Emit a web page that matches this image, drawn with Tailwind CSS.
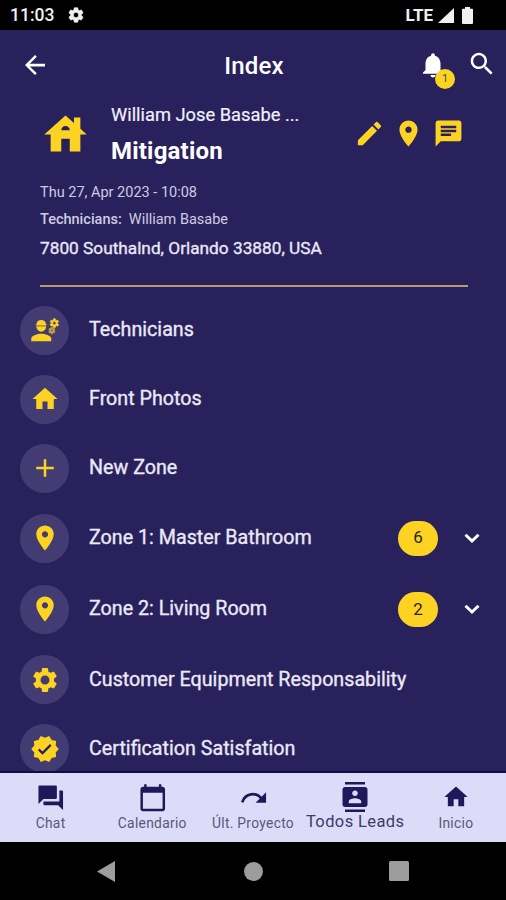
<!DOCTYPE html>
<html lang="en">
<head>
<meta charset="utf-8">
<title>Index</title>
<script src="https://cdn.jsdelivr.net/npm/@tailwindcss/browser@4"></script>
</head>
<body class="font-['Roboto','Noto_Sans',sans-serif]">
<svg class="hidden">
  <symbol id="home" viewBox="0 0 24 24"><path d="M10 20v-6h4v6h5v-8h3L12 3 2 12h3v8z"/></symbol>
  <symbol id="place" viewBox="0 0 24 24"><path d="M12 2C8.13 2 5 5.13 5 9c0 5.25 7 13 7 13s7-7.75 7-13c0-3.87-3.13-7-7-7zm0 9.5c-1.38 0-2.5-1.12-2.5-2.5s1.12-2.5 2.5-2.5 2.5 1.12 2.5 2.5-1.12 2.5-2.5 2.5z"/></symbol>
  <symbol id="gear" viewBox="0 0 24 24"><path d="M19.14 12.94c.04-.3.06-.61.06-.94 0-.32-.02-.64-.07-.94l2.03-1.58c.18-.14.23-.41.12-.61l-1.92-3.32c-.12-.22-.37-.29-.59-.22l-2.39.96c-.5-.38-1.03-.7-1.62-.94l-.36-2.54c-.04-.24-.24-.41-.48-.41h-3.84c-.24 0-.43.17-.47.41l-.36 2.54c-.59.24-1.13.57-1.62.94l-2.39-.96c-.22-.08-.47 0-.59.22L2.74 8.87c-.12.21-.08.47.12.61l2.03 1.58c-.05.3-.09.63-.09.94s.02.64.07.94l-2.03 1.58c-.18.14-.23.41-.12.61l1.92 3.32c.12.22.37.29.59.22l2.39-.96c.5.38 1.03.7 1.62.94l.36 2.54c.05.24.24.41.48.41h3.84c.24 0 .44-.17.47-.41l.36-2.54c.59-.24 1.13-.56 1.62-.94l2.39.96c.22.08.47 0 .59-.22l1.92-3.32c.12-.22.07-.47-.12-.61l-2.01-1.58zM12 15.6c-1.98 0-3.6-1.62-3.6-3.6s1.62-3.6 3.6-3.6 3.6 1.62 3.6 3.6-1.62 3.6-3.6 3.6z"/></symbol>
  <symbol id="down" viewBox="0 0 24 24"><path d="M6.8 9.4L12 14.400l5.200-5" fill="none" stroke="currentColor" stroke-width="2.400"/></symbol>
</svg>
<div class="w-[506px] h-[900px] flex flex-col overflow-hidden bg-[#28215c] text-[#f1effa]">

  <!-- Status bar -->
  <div class="h-[30px] shrink-0 bg-black flex items-center pl-[10px] pr-[33px] text-[#f0f0f0]">
    <span class="text-[17.5px] leading-none font-medium pt-[2px]">11:03</span>
    <svg class="size-[18px] ml-[13px] fill-current stroke-current"><use href="#gear"/></svg>
    <span class="ml-auto text-[17px] leading-none font-bold">LTE</span>
    <svg class="w-4 h-[15px] ml-[5px] fill-current" viewBox="0 0 16 15"><path d="M16 0v15H0z"/></svg>
    <svg class="w-[11px] h-[17px] ml-[8px] fill-current" viewBox="0 0 11 17"><path d="M3 0h5v1.8h2q1 0 1 1V16q0 1-1 1H1q-1 0-1-1V2.800q0-1 1-1h2z"/></svg>
  </div>

  <!-- App bar -->
  <header class="h-[70px] shrink-0 grid grid-cols-[1fr_auto_1fr] items-center pl-5 pr-[9px] text-white">
    <svg class="size-[30px] fill-current" viewBox="0 0 24 24"><path d="M20 10.900H7.830l5.590-5.490L12 4l-8 8 8 8 1.410-1.410L7.830 13.100H20v-2.200z"/></svg>
    <h1 class="text-[24px] font-medium pt-[1px] tracking-[0.2px] -ml-[10px] -mr-[1px]">Index</h1>
    <div class="flex justify-end items-center gap-[19px]">
      <div class="relative">
        <svg class="size-[30px] fill-current" viewBox="0 0 24 24"><path d="M12 22c1.100 0 2-.9 2-2h-4c0 1.100.890 2 2 2zm6-6v-5c0-3.070-1.640-5.640-4.500-6.320V4c0-.830-.670-1.500-1.500-1.500s-1.500.670-1.500 1.500v.680C7.630 5.360 6 7.920 6 11v5l-2 2v1h16v-1l-2-2z"/></svg>
        <span class="absolute left-[17px] top-[19px] size-5 rounded-full bg-[#fdd323] text-[#5a4a33] text-[11px] flex items-center justify-center">1</span>
      </div>
      <svg class="size-[30px] fill-current -mt-[2px]" viewBox="0 0 24 24"><path d="M15.500 14h-.790l-.280-.270C15.410 12.590 16 11.110 16 9.500 16 5.910 13.090 3 9.500 3S3 5.910 3 9.500 5.910 16 9.500 16c1.610 0 3.090-.590 4.230-1.570l.270.280v.790l5 4.990L20.490 19l-4.990-5zm-6 0C7.010 14 5 11.990 5 9.500S7.010 5 9.500 5 14 7.010 14 9.500 11.990 14 9.500 14z"/></svg>
    </div>
  </header>

  <!-- Project summary -->
  <section class="h-[195.500px] shrink-0 pl-10 pr-[38px]">
    <div class="flex h-[76px]">
      <svg class="size-[51px] mt-[9px] fill-[#fdd323]" viewBox="0 0 24 24"><path d="M19 9.300V4h-3v2.600L12 3 2 12h3v8h5v-6h4v6h5v-8h3l-3-2.700zm-9 .7c0-1.100.9-2 2-2s2 .9 2 2h-4z"/></svg>
      <div class="ml-5 w-[225px]">
        <p class="text-[18.300px] leading-[30px] whitespace-nowrap [-webkit-text-stroke:0.2px]">William Jose Basabe ...</p>
        <p class="text-[24px] leading-[30px] mt-[6px] font-bold tracking-[0.2px] text-white">Mitigation</p>
      </div>
      <div class="flex gap-[8.600px] mt-[18px] ml-[17.500px] fill-[#fdd323]">
        <svg class="size-[31px]" viewBox="0 0 24 24"><path d="M3 17.250V21h3.750L17.810 9.940l-3.750-3.750L3 17.250zM20.710 7.040c.390-.390.390-1.020 0-1.410l-2.340-2.340c-.390-.390-1.020-.390-1.410 0l-1.830 1.830 3.750 3.750 1.830-1.830z"/></svg>
        <svg class="size-[31px]"><use href="#place"/></svg>
        <svg class="size-[31px]" viewBox="0 0 24 24"><path d="M20 2H4c-1.100 0-1.990.9-1.990 2L2 22l4-4h14c1.100 0 2-.9 2-2V4c0-1.100-.9-2-2-2zM6 9h12v2H6V9zm8 5H6v-2h8v2zm4-6H6V6h12v2z"/></svg>
      </div>
    </div>
    <p class="mt-[7px] text-[14.500px] leading-5 text-[#cfcbe0]">Thu 27, Apr 2023 - 10:08</p>
    <p class="mt-[7px] text-[14.500px] leading-5 text-[#cfcbe0]"><span class="font-medium mr-[7px]">Technicians:</span>William Basabe</p>
    <p class="mt-[5px] text-[17.250px] leading-[26px] [-webkit-text-stroke:0.35px] text-[#e9e6f5]">7800 Southalnd, Orlando 33880, USA</p>
    <div class="mt-[24px] h-[1.500px] bg-[#b39c70]"></div>
  </section>

  <!-- Menu -->
  <main class="flex-1 min-h-0 overflow-hidden pl-5 pr-[19px] text-[19.700px] [-webkit-text-stroke:0.35px] text-[#ebe8f6] [&_i]:size-[49px] [&_i]:rounded-full [&_i]:bg-[#433c72] [&_i]:flex [&_i]:items-center [&_i]:justify-center [&_i]:mr-5 [&_i]:fill-[#fdd323]">
    <div class="h-[69px] flex items-center"><i><svg class="size-[30px]" viewBox="0 0 24 24"><path d="M9 15c-2.670 0-8 1.340-8 4v2h16v-2c0-2.660-5.330-4-8-4z"/><path d="M5 9h8a4 4.300 0 0 1-8 0zM4.200 8a.5.5 0 0 1 .5-.5H5.200C5.400 5 7 4 9 4s3.600 1 3.800 3.500h.5a.5.5 0 0 1 .5.5z"/><path d="M5 8h8v1H5z" fill="#b39834"/><path d="M21.980 6.230l.930-.830-.750-1.300-1.190.390c-.140-.110-.300-.200-.470-.270L20.250 3h-1.500l-.250 1.220c-.170.070-.330.160-.480.270l-1.180-.390-.750 1.300.930.830c-.020.170-.020.350 0 .520l-.930.850.750 1.300 1.200-.380c.130.100.280.180.430.250l.280 1.230h1.500l.270-1.220c.160-.070.300-.150.440-.250l1.190.380.750-1.300-.930-.850c.030-.190.020-.360.010-.530zM19.500 7.750c-.690 0-1.250-.560-1.250-1.250s.560-1.250 1.250-1.250 1.250.560 1.250 1.250-.560 1.250-1.250 1.250z" stroke="#fdd323" stroke-width=".5"/><path opacity=".7" stroke="#fdd323" stroke-width=".7" d="M19.400 10.790l-.850.280c-.100-.080-.210-.140-.330-.190l-.180-.880h-1.070l-.180.870c-.120.050-.240.120-.340.190l-.840-.280-.540.930.660.590c-.010.130-.010.250 0 .370l-.660.610.540.930.860-.270c.100.070.200.130.310.180l.180.880h1.070l.190-.870c.110-.050.220-.110.320-.180l.850.270.540-.930-.660-.610c.010-.130.010-.250 0-.370l.660-.590-.530-.930zm-1.900 2.600c-.490 0-.890-.400-.890-.890s.400-.890.890-.890.890.400.890.890-.400.890-.890.890z"/></svg></i><span>Technicians</span></div>
    <div class="h-[69px] flex items-center"><i><svg class="size-[30px]"><use href="#home"/></svg></i><span>Front Photos</span></div>
    <div class="h-[69px] flex items-center"><i><svg class="size-[30px]" viewBox="0 0 24 24"><path d="M19 13h-6v6h-2v-6H5v-2h6V5h2v6h6v2z"/></svg></i><span>New Zone</span></div>
    <div class="h-[71px] flex items-center"><i><svg class="size-[30px]"><use href="#place"/></svg></i><span>Zone 1: Master Bathroom</span><b class="ml-auto w-10 h-[35px] rounded-full bg-[#fdd323] text-[#2b2413] text-[17px] font-normal [-webkit-text-stroke:0] flex items-center justify-center">6</b><svg class="size-[30px] ml-[19px] text-white"><use href="#down"/></svg></div>
    <div class="h-[71.500px] flex items-center"><i><svg class="size-[30px]"><use href="#place"/></svg></i><span>Zone 2: Living Room</span><b class="ml-auto w-10 h-[35px] rounded-full bg-[#fdd323] text-[#2b2413] text-[17px] font-normal [-webkit-text-stroke:0] flex items-center justify-center">2</b><svg class="size-[30px] ml-[19px] text-white"><use href="#down"/></svg></div>
    <div class="h-[69px] flex items-center"><i><svg class="size-[30px]"><use href="#gear"/></svg></i><span>Customer Equipment Responsability</span></div>
    <div class="h-[69px] flex items-center"><i><svg class="size-[30px]" viewBox="0 0 24 24"><path d="M23 12l-2.440-2.780.340-3.680-3.610-.820-1.890-3.180L12 3 8.600 1.540 6.710 4.720l-3.610.810.340 3.680L1 12l2.440 2.780-.340 3.690 3.610.820 1.890 3.180L12 21l3.400 1.460 1.890-3.180 3.610-.820-.340-3.680L23 12z"/><path d="M7 12.300l3 3 6.600-6.600" fill="none" stroke="#28215c" stroke-width="1.700"/></svg></i><span>Certification Satisfation</span></div>
  </main>

  <!-- Tab bar -->
  <nav class="h-[71px] shrink-0 border-t-2 border-[#130b4a] bg-[#dddcf8] grid grid-cols-5 text-[#5b5679] text-[13.800px] tracking-[0.300px] text-center [&_div]:flex [&_div]:flex-col [&_div]:items-center [&_span]:whitespace-nowrap [&_span]:leading-5 [&_svg]:fill-[#1f1859]">
    <div><svg class="size-[29.500px] mt-[10px]" viewBox="0 0 24 24"><path d="M21 6h-2v9H6v2c0 .550.450 1 1 1h11l4 4V7c0-.550-.450-1-1-1zm-4 6V3c0-.550-.450-1-1-1H3c-.550 0-1 .450-1 1v14l4-4h10c.550 0 1-.450 1-1z"/></svg><span>Chat</span></div>
    <div><svg class="size-[29.500px] mt-[10px] ml-[1px]" viewBox="0 0 24 24"><path d="M20 3h-1V1h-2v2H7V1H5v2H4c-1.100 0-2 .9-2 2v16c0 1.100.9 2 2 2h16c1.100 0 2-.9 2-2V5c0-1.100-.9-2-2-2zm0 18H4V8h16v13z"/></svg><span class="ml-[1px]">Calendario</span></div>
    <div><svg class="size-[29.500px] mt-[10px] ml-[1px]" viewBox="0 0 24 24"><path d="M2.600 15.700C5 8 14 7 18.500 13" style="fill:none" stroke="#1f1859" stroke-width="2.200"/><path d="M22 7.500v8.500h-8.500z"/></svg><span>Últ. Proyecto</span></div>
    <div><svg class="size-[30px] mt-[9px] ml-[1px]" viewBox="0 0 24 24"><path d="M20 0H4v2h16V0zM4 24h16v-2H4v2zM20 4H4c-1.100 0-2 .9-2 2v12c0 1.100.9 2 2 2h16c1.100 0 2-.9 2-2V6c0-1.100-.9-2-2-2zm-8 2.750c1.240 0 2.250 1.010 2.250 2.250s-1.010 2.250-2.250 2.250S9.750 10.240 9.750 9 10.760 6.750 12 6.750zM17 17H7v-1.500c0-1.670 3.330-2.500 5-2.500s5 .830 5 2.500V17z"/></svg><span class="text-[16.500px] tracking-[0.400px] ml-[2px] text-[#403a6b]">Todos Leads</span></div>
    <div><svg class="size-[28px] mt-[10px] ml-[1px]"><use href="#home"/></svg><span class="mt-[1.500px] ml-[1px]">Inicio</span></div>
  </nav>

  <!-- System navigation -->
  <div class="h-[58px] shrink-0 bg-black flex items-center justify-between pl-[97px] pr-[97px] fill-[#9c9c9c]">
    <svg class="w-[18px] h-[21px]" viewBox="0 0 19 22"><path d="M19 0v22L0 11z"/></svg>
    <svg class="size-[19px] ml-[2px]" viewBox="0 0 19 19"><circle cx="9.500" cy="9.500" r="9.500"/></svg>
    <svg class="size-[20px]" viewBox="0 0 20 20"><rect width="20" height="20" rx="1.500"/></svg>
  </div>
</div>
</body>
</html>
